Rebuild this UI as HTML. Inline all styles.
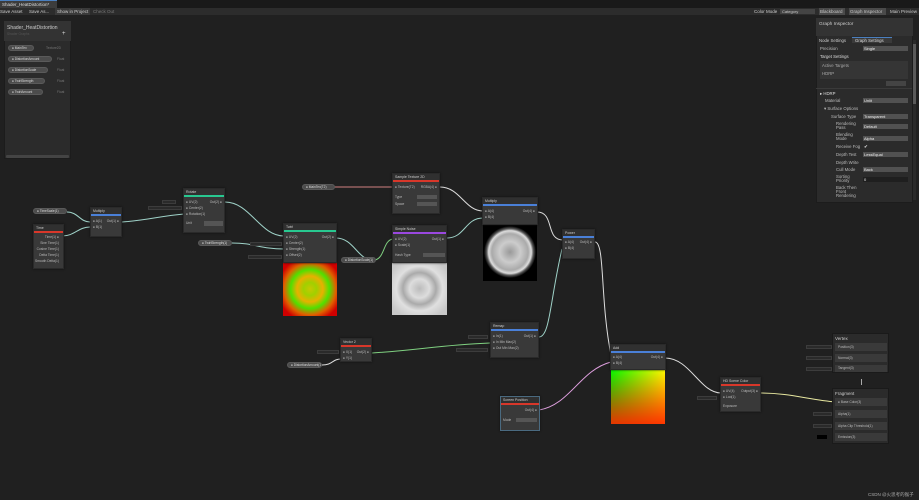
<!DOCTYPE html>
<html><head><meta charset="utf-8"><style>
*{margin:0;padding:0;box-sizing:border-box}
body{width:919px;height:500px;background:#202020;overflow:hidden;position:relative;font-family:"Liberation Sans","Noto Sans CJK SC",sans-serif;color:#c8c8c8;font-size:4px}
.a{position:absolute}
.node{position:absolute;background:#393939;border:1px solid #2a2a2a;box-shadow:0 0 2px #111}
.hd{height:6px;background:#303030;font-size:3.5px;padding:1px 2px;color:#ccc;white-space:nowrap;overflow:hidden}
.bar{height:2px}
.pill{position:absolute;height:6px;border-radius:3px;background:#4c4c4c;border:1px solid #5a5a5a;font-size:3.2px;line-height:4px;padding:0 3px;color:#ddd;white-space:nowrap;overflow:hidden}
.t{position:absolute;font-size:3.3px;color:#bbb;white-space:nowrap}
.f{position:absolute;background:#2a2a2a;border:1px solid #3c3c3c;height:4px}
</style></head><body>
<div class="a" style="left:0;top:0;width:919px;height:8px;background:#191919"></div>
<div class="a" style="left:0;top:0;width:57px;height:8px;background:#3c3c3c;border-top:1px solid #4a7fbf;font-size:4.5px;padding:1px 2px;color:#ddd;white-space:nowrap">Shader_HeatDistortion*</div>
<div class="a" style="left:0;top:8px;width:919px;height:7px;background:#2c2c2c"></div>
<div class="t" style="left:0;top:9px;font-size:4.5px;color:#ccc">Save Asset</div>
<div class="t" style="left:29px;top:9px;font-size:4.5px;color:#ccc">Save As...</div>
<div class="a" style="left:55px;top:8px;width:35px;height:7px;background:#3a3a3a"></div>
<div class="t" style="left:57px;top:9px;font-size:4.5px;color:#ccc">Show in Project</div>
<div class="t" style="left:93px;top:9px;font-size:4.5px;color:#777">Check Out</div>
<div class="t" style="left:754px;top:9px;font-size:4.5px;color:#ccc">Color Mode</div>
<div class="a" style="left:780px;top:9px;width:35px;height:5px;background:#444;font-size:4px;padding-left:2px">Category</div>
<div class="a" style="left:819px;top:8px;width:26px;height:7px;background:#4a4a4a;font-size:4.5px;padding:1px 1px;white-space:nowrap">Blackboard</div>
<div class="a" style="left:849px;top:8px;width:37px;height:7px;background:#4a4a4a;font-size:4.5px;padding:1px 1px;white-space:nowrap">Graph Inspector</div>
<div class="t" style="left:890px;top:9px;font-size:4.5px;color:#ccc">Main Preview</div>

<div class="a" style="left:4px;top:21px;width:67px;height:138px;background:#2b2b2b;border:1px solid #1c1c1c"></div>
<div class="a" style="left:4px;top:21px;width:67px;height:20px;background:#333"></div>
<div class="t" style="left:7px;top:25px;font-size:5px;color:#ccc">Shader_HeatDistortion</div>
<div class="t" style="left:7px;top:32px;color:#555">Shader Graphs</div>
<div class="t" style="left:62px;top:31px;font-size:6px;color:#ddd">+</div>
<div class="pill" style="left:8px;top:45px;width:26px">● MainTex</div><div class="t" style="left:46px;top:46px;color:#777">Texture2D</div>
<div class="pill" style="left:8px;top:56px;width:44px">● DistortionAmount</div><div class="t" style="left:57px;top:57px;color:#777">Float</div>
<div class="pill" style="left:8px;top:67px;width:40px">● DistortionScale</div><div class="t" style="left:57px;top:68px;color:#777">Float</div>
<div class="pill" style="left:8px;top:78px;width:37px">● TwirlStrength</div><div class="t" style="left:57px;top:79px;color:#777">Float</div>
<div class="pill" style="left:8px;top:89px;width:35px">● TwirlAmount</div><div class="t" style="left:57px;top:90px;color:#777">Float</div>
<div class="a" style="left:6px;top:155px;width:63px;height:3px;background:#444;border-radius:1px"></div>

<div class="a" style="left:816px;top:18px;width:97px;height:185px;background:#2b2b2b;border:1px solid #1c1c1c"></div>
<div class="a" style="left:816px;top:18px;width:97px;height:18px;background:#333"></div>
<div class="t" style="left:819px;top:22px;font-size:4.8px;color:#ccc">Graph Inspector</div>
<div class="t" style="left:819px;top:38px;font-size:4.3px;color:#ccc">Node Settings</div>
<div class="a" style="left:852px;top:37px;width:40px;height:6px;background:#3a3a3a;border-top:1px solid #4a7fbf"></div>
<div class="t" style="left:855px;top:38px;font-size:4.3px;color:#ddd">Graph Settings</div>
<div class="t" style="left:820px;top:46px;font-size:4.3px">Precision</div><div class="a" style="left:863px;top:46px;width:45px;height:5px;background:#515151;font-size:4px;padding-left:1px;color:#eee">Single</div>
<div class="t" style="left:820px;top:54px;font-size:4.3px;color:#ddd">Target Settings</div>
<div class="a" style="left:820px;top:61px;width:88px;height:18px;background:#353535"></div>
<div class="t" style="left:822px;top:63px;font-size:4.3px;color:#aaa">Active Targets</div>
<div class="t" style="left:822px;top:71px;font-size:4.3px;color:#aaa">HDRP</div>
<div class="a" style="left:886px;top:81px;width:20px;height:5px;background:#444"></div>
<div class="t" style="left:820px;top:91px;font-size:4.3px;color:#ddd">▸ HDRP</div>
<div class="a" style="left:816px;top:88px;width:96px;height:1px;background:#3a3a3a"></div>
<div class="t" style="left:825px;top:98px;font-size:4.3px">Material</div><div class="a" style="left:863px;top:98px;width:45px;height:5px;background:#515151;font-size:4px;padding-left:1px;color:#eee">Unlit</div>
<div class="t" style="left:824px;top:106px;font-size:4.3px">▾ Surface Options</div>
<div class="t" style="left:831px;top:114px;font-size:4.3px">Surface Type</div><div class="a" style="left:863px;top:114px;width:45px;height:5px;background:#515151;font-size:4px;padding-left:1px;color:#eee">Transparent</div>
<div class="t" style="left:836px;top:122px;font-size:4.3px;line-height:4px">Rendering<br>Pass</div><div class="a" style="left:863px;top:124px;width:45px;height:5px;background:#515151;font-size:4px;padding-left:1px;color:#eee">Default</div>
<div class="t" style="left:836px;top:133px;font-size:4.3px;line-height:4px">Blending<br>Mode</div><div class="a" style="left:863px;top:136px;width:45px;height:5px;background:#515151;font-size:4px;padding-left:1px;color:#eee">Alpha</div>
<div class="t" style="left:836px;top:144px;font-size:4.3px">Receive Fog</div><div class="t" style="left:864px;top:144px;font-size:4.3px;color:#eee">✔</div>
<div class="t" style="left:836px;top:152px;font-size:4.3px">Depth Test</div><div class="a" style="left:863px;top:152px;width:45px;height:5px;background:#515151;font-size:4px;padding-left:1px;color:#eee">LessEqual</div>
<div class="t" style="left:836px;top:160px;font-size:4.3px">Depth Write</div>
<div class="t" style="left:836px;top:167px;font-size:4.3px">Cull Mode</div><div class="a" style="left:863px;top:167px;width:45px;height:5px;background:#515151;font-size:4px;padding-left:1px;color:#eee">Back</div>
<div class="t" style="left:836px;top:175px;font-size:4.3px;line-height:4px">Sorting<br>Priority</div><div class="a" style="left:863px;top:177px;width:45px;height:5px;background:#1f1f1f;font-size:4px;padding-left:1px;color:#eee">0</div>
<div class="t" style="left:836px;top:186px;font-size:4.3px;line-height:4px">Back Then<br>Front<br>Rendering</div>
<div class="a" style="left:913px;top:40px;width:3px;height:160px;background:#2a2a2a"></div>
<div class="a" style="left:913px;top:44px;width:3px;height:60px;background:#5a5a5a"></div>

<svg class="a" style="left:0;top:0" width="919" height="500">
<defs>
<radialGradient id="tw" cx="50%" cy="50%" r="60%"><stop offset="0" stop-color="#c8c800"/><stop offset=".2" stop-color="#a0d000"/><stop offset=".4" stop-color="#e8b000"/><stop offset=".6" stop-color="#50e000"/><stop offset=".8" stop-color="#e06000"/><stop offset="1" stop-color="#d00000"/></radialGradient>
<radialGradient id="ns" cx="50%" cy="50%" r="60%"><stop offset="0" stop-color="#bbb"/><stop offset=".3" stop-color="#ddd"/><stop offset=".5" stop-color="#aaa"/><stop offset=".7" stop-color="#e0e0e0"/><stop offset="1" stop-color="#c8c8c8"/></radialGradient>
<radialGradient id="mu" cx="50%" cy="50%" r="50%"><stop offset="0" stop-color="#999"/><stop offset=".4" stop-color="#ccc"/><stop offset=".7" stop-color="#aaa"/><stop offset=".82" stop-color="#ddd"/><stop offset=".9" stop-color="#555"/><stop offset="1" stop-color="#000"/></radialGradient>
<linearGradient id="ax" x1="0" y1="0" x2="1" y2="0"><stop offset="0" stop-color="#00ff00"/><stop offset="1" stop-color="#ffff00"/></linearGradient>
<linearGradient id="ar" x1="0" y1="0" x2="0" y2="1"><stop offset="0" stop-color="#ff0000" stop-opacity="0"/><stop offset="1" stop-color="#ff2000" stop-opacity=".9"/></linearGradient>
</defs>
<g fill="none" stroke-width="1">
<path d="M67 212 C78 212 80 222 90 222" stroke="#9fd2c8"/>
<path d="M62 236 C75 236 78 227 90 227" stroke="#9fd2c8"/>
<path d="M122 222 C150 220 160 216 184 214" stroke="#9fd2c8"/>
<path d="M225 202 C250 202 260 236 284 236" stroke="#9fd2c8"/>
<path d="M232 243 C255 243 260 249 284 249" stroke="#9fd2c8"/>
<path d="M336 238 C355 238 358 263 376 260" stroke="#9fd2c8"/>
<path d="M375 260 C385 258 383 240 393 239" stroke="#7fd080"/>
<path d="M334 187 L392 187" stroke="#d08080"/>
<path d="M440 187 C460 187 465 211 483 211" stroke="#ddd"/>
<path d="M447 238 C465 238 465 218 483 218" stroke="#9fd2c8"/>
<path d="M537 212 C555 212 545 240 563 240" stroke="#ddd"/>
<path d="M539 337 C550 337 550 300 562 249" stroke="#9fd2c8"/>
<path d="M595 242 C605 242 600 300 611 355" stroke="#ddd"/>
<path d="M372 353 C420 350 440 345 490 343" stroke="#7fd080"/>
<path d="M322 365 C333 365 332 359 341 359" stroke="#ddd"/>
<path d="M539 410 C570 405 580 370 611 362" stroke="#e0a0e0"/>
<path d="M665 358 C690 358 700 393 721 393" stroke="#ddd"/>
<path d="M760 393 C790 393 810 400 836 402" stroke="#e8e8a0"/>
</g>
<rect x="283" y="262" width="54" height="54" fill="url(#tw)"/>
<rect x="392" y="262" width="55" height="53" fill="url(#ns)"/>
<rect x="483" y="224" width="54" height="57" fill="#000"/>
<circle cx="510" cy="252" r="26" fill="url(#mu)"/>
<rect x="611" y="369" width="54" height="55" fill="url(#ax)"/>
<rect x="611" y="369" width="54" height="55" fill="url(#ar)"/>
</svg>

<div class="pill" style="left:33px;top:208px;width:34px">● TimeScale(1)</div>
<div class="pill" style="left:302px;top:184px;width:33px">● MainTex(T2)</div>
<div class="pill" style="left:198px;top:240px;width:34px">● TwirlStrength(1)</div>
<div class="pill" style="left:341px;top:257px;width:35px">● DistortionScale(1)</div>
<div class="pill" style="left:287px;top:362px;width:35px">● DistortionAmount(1)</div>

<div class="node" style="left:33px;top:224px;width:31px;height:45px"><div class="hd">Time</div><div class="bar" style="background:#d8372a"></div>
<div class="t" style="right:4px;top:10px">Time(1) ●</div><div class="t" style="right:4px;top:16px">Sine Time(1)</div><div class="t" style="right:4px;top:22px">Cosine Time(1)</div><div class="t" style="right:4px;top:28px">Delta Time(1)</div><div class="t" style="right:4px;top:34px">Smooth Delta(1)</div></div>
<div class="node" style="left:90px;top:207px;width:32px;height:30px"><div class="hd">Multiply</div><div class="bar" style="background:#4a80d8"></div><div class="t" style="left:2px;top:11px">● A(1)</div><div class="t" style="left:2px;top:17px">● B(1)</div><div class="t" style="right:2px;top:11px">Out(1) ●</div></div>
<div class="node" style="left:183px;top:188px;width:42px;height:45px"><div class="hd">Rotate</div><div class="bar" style="background:#28c890"></div><div class="t" style="left:2px;top:11px">● UV(2)</div><div class="t" style="left:2px;top:17px">● Center(2)</div><div class="t" style="left:2px;top:23px">● Rotation(1)</div><div class="t" style="right:2px;top:11px">Out(2) ●</div><div class="t" style="left:2px;top:32px">Unit</div><div class="a" style="left:20px;top:32px;width:19px;height:5px;background:#555"></div></div>
<div class="f" style="left:162px;top:200px;width:14px"></div><div class="f" style="left:148px;top:206px;width:34px"></div>
<div class="node" style="left:283px;top:223px;width:54px;height:40px"><div class="hd">Twirl</div><div class="bar" style="background:#28c890"></div><div class="t" style="left:2px;top:11px">● UV(2)</div><div class="t" style="left:2px;top:17px">● Center(2)</div><div class="t" style="left:2px;top:23px">● Strength(1)</div><div class="t" style="left:2px;top:29px">● Offset(2)</div><div class="t" style="right:2px;top:11px">Out(2) ●</div></div>
<div class="f" style="left:250px;top:242px;width:32px"></div><div class="f" style="left:248px;top:255px;width:34px"></div>
<div class="node" style="left:392px;top:173px;width:48px;height:41px"><div class="hd">Sample Texture 2D</div><div class="bar" style="background:#d8372a"></div><div class="t" style="left:2px;top:11px">● Texture(T2)</div><div class="t" style="right:2px;top:11px">RGBA(4) ●</div><div class="t" style="left:2px;top:21px">Type</div><div class="t" style="left:2px;top:28px">Space</div><div class="a" style="left:24px;top:21px;width:20px;height:4px;background:#555"></div><div class="a" style="left:24px;top:28px;width:20px;height:4px;background:#555"></div></div>
<div class="node" style="left:392px;top:225px;width:55px;height:38px"><div class="hd">Simple Noise</div><div class="bar" style="background:#9a48e0"></div><div class="t" style="left:2px;top:11px">● UV(2)</div><div class="t" style="left:2px;top:17px">● Scale(1)</div><div class="t" style="right:2px;top:11px">Out(1) ●</div><div class="t" style="left:2px;top:27px">Hash Type</div><div class="a" style="left:30px;top:27px;width:22px;height:4px;background:#555"></div></div>
<div class="node" style="left:482px;top:197px;width:56px;height:28px"><div class="hd">Multiply</div><div class="bar" style="background:#4a80d8"></div><div class="t" style="left:2px;top:11px">● A(4)</div><div class="t" style="left:2px;top:17px">● B(4)</div><div class="t" style="right:2px;top:11px">Out(4) ●</div></div>
<div class="node" style="left:562px;top:229px;width:33px;height:30px"><div class="hd">Power</div><div class="bar" style="background:#4a80d8"></div><div class="t" style="left:2px;top:10px">● A(4)</div><div class="t" style="left:2px;top:16px">● B(4)</div><div class="t" style="right:2px;top:10px">Out(4) ●</div></div>
<div class="node" style="left:490px;top:322px;width:49px;height:36px"><div class="hd">Remap</div><div class="bar" style="background:#4a80d8"></div><div class="t" style="left:2px;top:11px">● In(1)</div><div class="t" style="left:2px;top:17px">● In Min Max(2)</div><div class="t" style="left:2px;top:23px">● Out Min Max(2)</div><div class="t" style="right:2px;top:11px">Out(1) ●</div></div>
<div class="f" style="left:468px;top:335px;width:20px"></div><div class="f" style="left:456px;top:348px;width:32px"></div>
<div class="node" style="left:340px;top:338px;width:32px;height:24px"><div class="hd">Vector 2</div><div class="bar" style="background:#d8372a"></div><div class="t" style="left:2px;top:11px">● X(1)</div><div class="t" style="left:2px;top:17px">● Y(1)</div><div class="t" style="right:2px;top:11px">Out(2) ●</div></div>
<div class="f" style="left:317px;top:350px;width:22px"></div>
<div class="node" style="left:500px;top:396px;width:40px;height:35px;border-color:#4a6a80"><div class="hd">Screen Position</div><div class="bar" style="background:#d8372a"></div><div class="t" style="right:2px;top:11px">Out(4) ●</div><div class="t" style="left:2px;top:21px">Mode</div><div class="a" style="left:15px;top:21px;width:21px;height:4px;background:#555"></div></div>
<div class="node" style="left:610px;top:344px;width:56px;height:26px"><div class="hd">Add</div><div class="bar" style="background:#4a80d8"></div><div class="t" style="left:2px;top:10px">● A(4)</div><div class="t" style="left:2px;top:16px">● B(4)</div><div class="t" style="right:2px;top:10px">Out(4) ●</div></div>
<div class="node" style="left:720px;top:377px;width:41px;height:35px"><div class="hd">HD Scene Color</div><div class="bar" style="background:#d8372a"></div><div class="t" style="left:2px;top:11px">● UV(4)</div><div class="t" style="left:2px;top:17px">● Lod(1)</div><div class="t" style="right:2px;top:11px">Output(3) ●</div><div class="t" style="left:2px;top:26px">Exposure</div></div>
<div class="f" style="left:697px;top:396px;width:20px"></div>

<div class="a" style="left:832px;top:333px;width:57px;height:40px;background:#2b2b2b;border:1px solid #1a1a1a"></div>
<div class="t" style="left:835px;top:336px;font-size:4.5px;color:#ccc">Vertex</div>
<div class="a" style="left:835px;top:343px;width:52px;height:8px;background:#3a3a3a"></div><div class="t" style="left:838px;top:345px">Position(3)</div>
<div class="a" style="left:835px;top:354px;width:52px;height:8px;background:#3a3a3a"></div><div class="t" style="left:838px;top:356px">Normal(3)</div>
<div class="a" style="left:835px;top:365px;width:52px;height:7px;background:#3a3a3a"></div><div class="t" style="left:838px;top:366px">Tangent(3)</div>
<div class="f" style="left:806px;top:345px;width:26px"></div><div class="f" style="left:806px;top:356px;width:26px"></div><div class="f" style="left:806px;top:367px;width:26px"></div>
<div class="a" style="left:861px;top:379px;width:1px;height:6px;background:#aaa"></div>
<div class="a" style="left:832px;top:388px;width:57px;height:56px;background:#2b2b2b;border:1px solid #1a1a1a"></div>
<div class="t" style="left:835px;top:391px;font-size:4.5px;color:#ccc">Fragment</div>
<div class="a" style="left:835px;top:398px;width:52px;height:8px;background:#3a3a3a"></div><div class="t" style="left:838px;top:400px">● Base Color(3)</div>
<div class="a" style="left:835px;top:410px;width:52px;height:8px;background:#3a3a3a"></div><div class="t" style="left:838px;top:412px">Alpha(1)</div>
<div class="a" style="left:835px;top:422px;width:52px;height:8px;background:#3a3a3a"></div><div class="t" style="left:838px;top:424px">Alpha Clip Threshold(1)</div>
<div class="a" style="left:835px;top:433px;width:52px;height:8px;background:#3a3a3a"></div><div class="t" style="left:838px;top:435px">Emission(3)</div>
<div class="f" style="left:813px;top:412px;width:19px"></div><div class="f" style="left:813px;top:424px;width:19px"></div><div class="a" style="left:817px;top:435px;width:10px;height:4px;background:#000"></div>
<div class="t" style="left:868px;top:492px;font-size:4.5px;color:#aaa">CSDN @火思考的猴子</div>
</body></html>
